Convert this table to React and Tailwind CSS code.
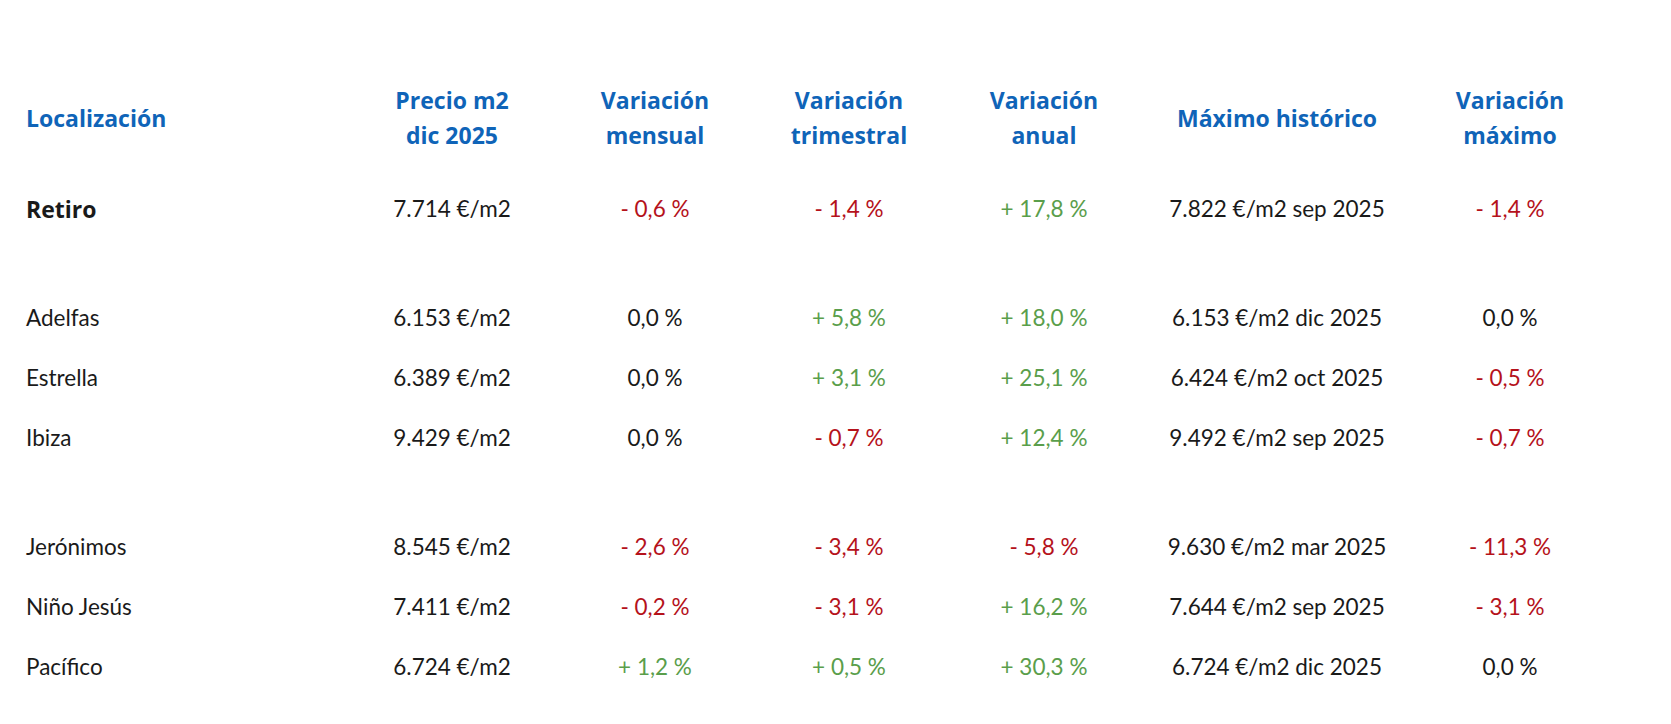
const rows = [
  { group: [["Retiro", "7.714 €/m2", "- 0,6 %", "- 1,4 %", "+ 17,8 %", "7.822 €/m2 sep 2025", "- 1,4 %"]], bold: true },
  {
    group: [
      ["Adelfas", "6.153 €/m2", "0,0 %", "+ 5,8 %", "+ 18,0 %", "6.153 €/m2 dic 2025", "0,0 %"],
      ["Estrella", "6.389 €/m2", "0,0 %", "+ 3,1 %", "+ 25,1 %", "6.424 €/m2 oct 2025", "- 0,5 %"],
      ["Ibiza", "9.429 €/m2", "0,0 %", "- 0,7 %", "+ 12,4 %", "9.492 €/m2 sep 2025", "- 0,7 %"],
    ],
  },
  {
    group: [
      ["Jerónimos", "8.545 €/m2", "- 2,6 %", "- 3,4 %", "- 5,8 %", "9.630 €/m2 mar 2025", "- 11,3 %"],
      ["Niño Jesús", "7.411 €/m2", "- 0,2 %", "- 3,1 %", "+ 16,2 %", "7.644 €/m2 sep 2025", "- 3,1 %"],
      ["Pacífico", "6.724 €/m2", "+ 1,2 %", "+ 0,5 %", "+ 30,3 %", "6.724 €/m2 dic 2025", "0,0 %"],
    ],
  },
];

const cols = "grid grid-cols-[350px_204px_202px_186px_204px_262px_204px]";

function tone(v) {
  if (v.startsWith("-")) return "text-[#b5121b]";
  if (v.startsWith("+")) return "text-[#5a9e4b]";
  return "text-[#1a1a1a]";
}

function Row({ cells, bold }) {
  return (
    <div className={`${cols} h-[60px] items-center`}>
      <div className={`pl-[26px] text-[#1a1a1a] ${bold ? "font-['Open_Sans',sans-serif] font-bold text-[23px]" : ""}`}>{cells[0]}</div>
      <div className="text-center text-[#1a1a1a]">{cells[1]}</div>
      <div className={`text-center ${tone(cells[2])}`}>{cells[2]}</div>
      <div className={`text-center ${tone(cells[3])}`}>{cells[3]}</div>
      <div className={`text-center ${tone(cells[4])}`}>{cells[4]}</div>
      <div className="text-center text-[#1a1a1a]">{cells[5]}</div>
      <div className={`text-center ${tone(cells[6])}`}>{cells[6]}</div>
    </div>
  );
}

export default function App() {
  const heads = [
    ["Precio m2", "dic 2025"],
    ["Variación", "mensual"],
    ["Variación", "trimestral"],
    ["Variación", "anual"],
    ["Máximo histórico"],
    ["Variación", "máximo"],
  ];
  return (
    <div className="min-h-screen bg-white pt-[83px] text-[22.5px] font-['Lato',sans-serif]">
      <div className={`${cols} h-[70px] items-center font-['Open_Sans',sans-serif] font-bold text-[23px] text-[#0f64b8] leading-[35px]`}>
        <div className="pl-[26px]">Localización</div>
        {heads.map((h, i) => (
          <div key={i} className="text-center">
            {h.map((l) => (
              <div key={l}>{l}</div>
            ))}
          </div>
        ))}
      </div>
      <div className="mt-[26px] flex flex-col gap-[49px]">
        {rows.map((g, gi) => (
          <div key={gi}>
            {g.group.map((r) => (
              <Row key={r[0]} cells={r} bold={g.bold} />
            ))}
          </div>
        ))}
      </div>
    </div>
  );
}
